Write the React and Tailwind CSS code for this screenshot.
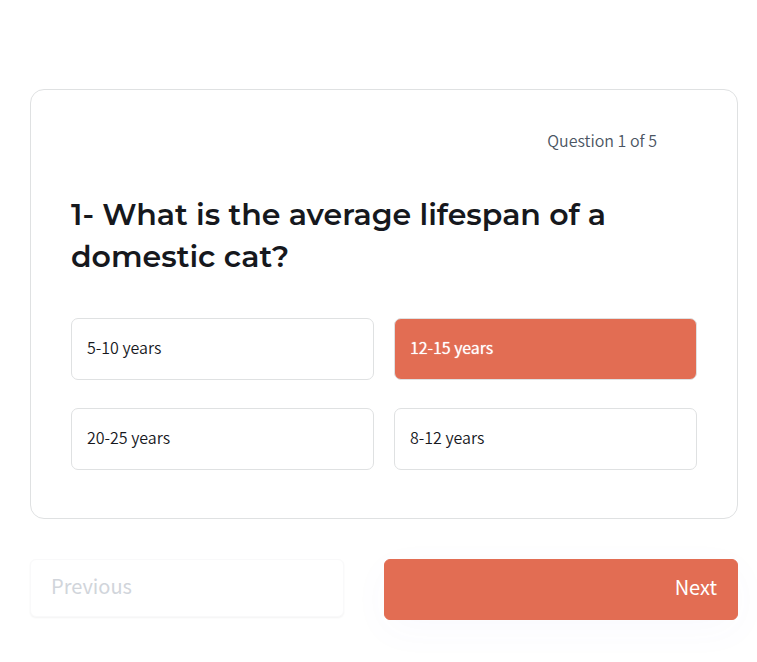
import { useState } from "react";

const options = ["5-10 years", "12-15 years", "20-25 years", "8-12 years"];

function Option({ label, selected, onSelect }) {
  return (
    <button
      type="button"
      aria-pressed={selected}
      onClick={onSelect}
      className={
        "rounded-[7px] border border-[#dfe1e2] px-[15px] pt-[14px] pb-[18px] text-left text-base leading-7 font-[350] " +
        (selected
          ? "bg-[#e26d53] text-white [text-shadow:0_0_1px_#fff]"
          : "bg-white text-[#16181d]")
      }
    >
      {label}
    </button>
  );
}

export default function App() {
  const [selected, setSelected] = useState("12-15 years");

  return (
    <main className="bg-white pt-[89px] pr-[19px] pb-10 pl-[30px] font-['Noto_Sans_CJK_SC','Noto_Sans',sans-serif]">
      <section className="rounded-[14px] border border-[#dfe1e2] px-10 pt-[34px] pb-12">
        <p className="pr-10 text-right text-base leading-8 font-[350] text-[#4b5563]">Question 1 of 5</p>
        <h1 className="mt-[38px] font-['Montserrat','Inter',sans-serif] text-[30px] leading-[42px] font-semibold text-[#16181d]">
          1- What is the average lifespan of a domestic cat?
        </h1>
        <div className="mt-10 grid grid-cols-2 gap-x-5 gap-y-7">
          {options.map((label) => (
            <Option
              key={label}
              label={label}
              selected={label === selected}
              onSelect={() => setSelected(label)}
            />
          ))}
        </div>
      </section>
      <nav className="mt-10 grid grid-cols-2 items-start text-xl leading-7">
        <button
          type="button"
          disabled
          className="mr-10 rounded-md border border-[#f9f9fa] bg-white px-5 pt-3 pb-4 text-left text-[#d1d5db] shadow-[0_1px_2px_rgba(0,0,0,0.05)]"
        >
          Previous
        </button>
        <button
          type="button"
          className="rounded-md border border-[#e26d53] bg-[#e26d53] px-5 pt-[13px] pb-[18px] text-right text-white shadow-[0_10px_40px_rgba(80,80,220,0.03)]"
        >
          Next
        </button>
      </nav>
    </main>
  );
}
